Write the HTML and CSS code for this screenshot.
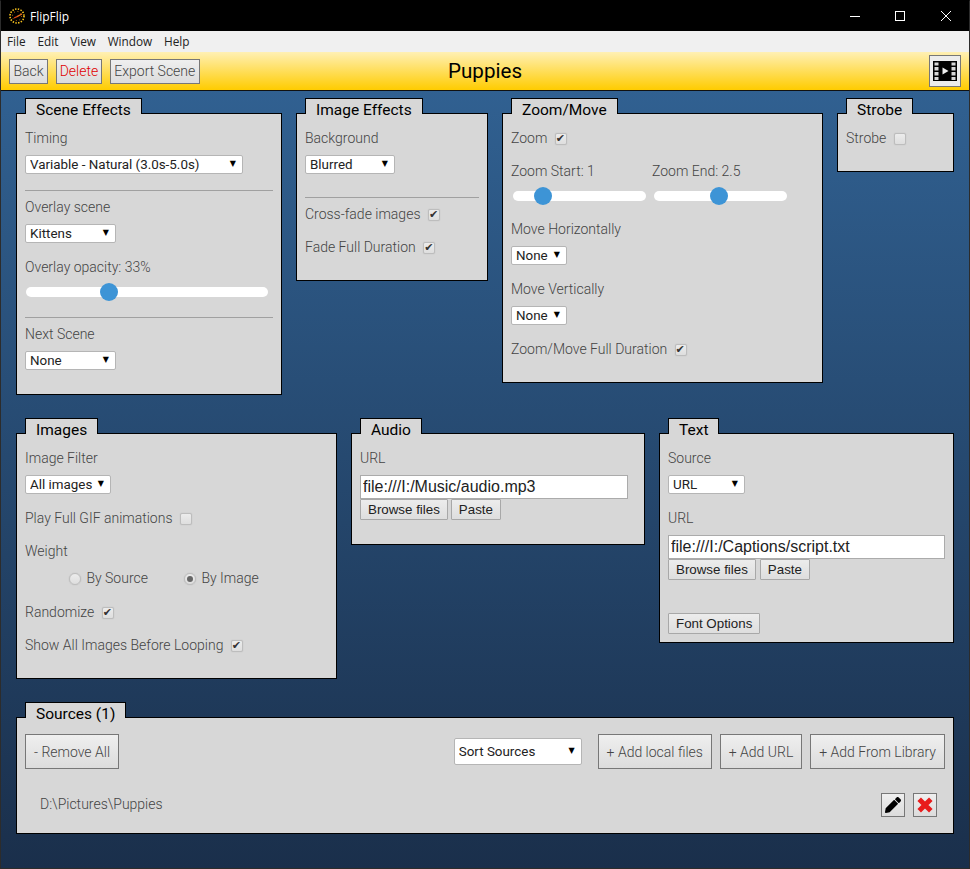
FILE: index.html
```html
<!DOCTYPE html>
<html lang="en">
<head>
    <meta charset="UTF-8">
    <title>FlipFlip</title>
    <link rel="stylesheet" href="styles.css">
</head>
<body>
<div class="app">
    <div class="titlebar">
        <svg class="logo" width="16" height="16" viewBox="0 0 16 16">
            <circle cx="8" cy="8" r="7" fill="none" stroke="#ffc81e" stroke-width="1.6" stroke-dasharray="1.4 1.4"/>
            <circle cx="8" cy="8" r="4.6" fill="none" stroke="#e08a10" stroke-width="0.9" stroke-dasharray="1 2.6"/>
            <path d="M8 8.600 L13 6" stroke="#f4721c" stroke-width="1.300"/>
            <path d="M8 8.600 L5 10" stroke="#e0441a" stroke-width="1.300"/>
        </svg>
        <span class="app-name">FlipFlip</span>
        <div class="window-controls">
            <svg class="win-min" width="10" height="10" viewBox="0 0 10 10"><path d="M0 5.500H10" stroke="#fff"/></svg>
            <svg class="win-max" width="10" height="10" viewBox="0 0 10 10"><rect x="0.500" y="0.500" width="9" height="9" fill="none" stroke="#fff"/></svg>
            <svg class="win-close" width="10" height="10" viewBox="0 0 10 10"><path d="M0 0L10 10M10 0L0 10" stroke="#fff"/></svg>
        </div>
    </div>
    <div class="menubar">
        <span>File</span><span>Edit</span><span>View</span><span>Window</span><span>Help</span>
    </div>
    <header class="header">
        <div class="header-left">
            <button class="tool-button">Back</button>
            <button class="tool-button delete">Delete</button>
            <button class="tool-button">Export Scene</button>
        </div>
        <h1 class="scene-title">Puppies</h1>
        <div class="header-right">
            <button class="play-button">
                <svg width="24" height="20" viewBox="0 0 24 20">
                    <rect width="24" height="20" fill="#000"/>
                    <path d="M1.500 1.500h4v3h-4zM1.500 6h4v3.500h-4zM1.500 11h4v3.500h-4zM1.500 16h4v3h-4zM18.500 1.500h4v3h-4zM18.500 6h4v3.500h-4zM18.500 11h4v3.500h-4zM18.500 16h4v3h-4z" fill="#d6d6d6"/>
                    <path d="M9.500 6.500L15.500 10L9.500 13.500z" fill="#eee"/>
                </svg>
            </button>
        </div>
    </header>

    <main class="content">
        <div class="row">
            <section class="card card-scene">
                <div class="tab">Scene Effects</div>
                <div class="panel">
                    <div class="label">Timing</div>
                    <div class="select select-timing"><select><option>Variable - Natural (3.0s-5.0s)</option></select></div>
                    <hr class="rule">
                    <div class="label">Overlay scene</div>
                    <div class="select select-scene"><select><option>Kittens</option></select></div>
                    <div class="label spaced">Overlay opacity: 33%</div>
                    <input class="slider slider-opacity" type="range" min="0" max="100" value="33">
                    <hr class="rule">
                    <div class="label">Next Scene</div>
                    <div class="select select-scene"><select><option>None</option></select></div>
                </div>
            </section>

            <section class="card card-image">
                <div class="tab">Image Effects</div>
                <div class="panel">
                    <div class="label">Background</div>
                    <div class="select select-bg"><select><option>Blurred</option></select></div>
                    <hr class="rule rule-low">
                    <label class="check-row">Cross-fade images <input type="checkbox" checked></label>
                    <label class="check-row spaced">Fade Full Duration <input type="checkbox" checked></label>
                </div>
            </section>

            <section class="card card-zoom">
                <div class="tab">Zoom/Move</div>
                <div class="panel">
                    <label class="check-row">Zoom <input type="checkbox" checked></label>
                    <div class="zoom-pair">
                        <div class="zoom-col">
                            <div class="label">Zoom Start: 1</div>
                            <input class="slider slider-zoom" type="range" min="0.1" max="5" step="0.1" value="1">
                        </div>
                        <div class="zoom-col">
                            <div class="label">Zoom End: 2.5</div>
                            <input class="slider slider-zoom" type="range" min="0.1" max="5" step="0.1" value="2.5">
                        </div>
                    </div>
                    <div class="label spaced">Move Horizontally</div>
                    <div class="select select-move"><select><option>None</option></select></div>
                    <div class="label spaced">Move Vertically</div>
                    <div class="select select-move"><select><option>None</option></select></div>
                    <label class="check-row spaced">Zoom/Move Full Duration <input type="checkbox" checked></label>
                </div>
            </section>

            <section class="card card-strobe">
                <div class="tab">Strobe</div>
                <div class="panel">
                    <label class="check-row">Strobe <input type="checkbox"></label>
                </div>
            </section>
        </div>

        <div class="row">
            <section class="card card-images">
                <div class="tab">Images</div>
                <div class="panel">
                    <div class="label">Image Filter</div>
                    <div class="select select-filter"><select><option>All images</option></select></div>
                    <label class="check-row spaced">Play Full GIF animations <input type="checkbox"></label>
                    <div class="label weight-label">Weight</div>
                    <div class="radio-row">
                        <label class="radio radio-source"><input type="radio" name="weight"> By Source</label>
                        <label class="radio"><input type="radio" name="weight" checked> By Image</label>
                    </div>
                    <label class="check-row randomize">Randomize <input type="checkbox" checked></label>
                    <label class="check-row spaced">Show All Images Before Looping <input type="checkbox" checked></label>
                </div>
            </section>

            <section class="card card-audio">
                <div class="tab">Audio</div>
                <div class="panel">
                    <div class="label">URL</div>
                    <input class="url-input" type="text" value="file:///I:/Music/audio.mp3">
                    <div class="file-buttons">
                        <button class="small-button">Browse files</button>
                        <button class="small-button">Paste</button>
                    </div>
                </div>
            </section>

            <section class="card card-text">
                <div class="tab">Text</div>
                <div class="panel">
                    <div class="label">Source</div>
                    <div class="select select-source"><select><option>URL</option></select></div>
                    <div class="label spaced">URL</div>
                    <input class="url-input" type="text" value="file:///I:/Captions/script.txt">
                    <div class="file-buttons">
                        <button class="small-button">Browse files</button>
                        <button class="small-button">Paste</button>
                    </div>
                    <button class="small-button font-options">Font Options</button>
                </div>
            </section>
        </div>

        <div class="row">
            <section class="card card-sources">
                <div class="tab">Sources (1)</div>
                <div class="panel">
                    <div class="sources-bar">
                        <button class="tool-button big">- Remove All</button>
                        <div class="sources-actions">
                            <div class="select select-sort"><select><option>Sort Sources</option></select></div>
                            <button class="tool-button big add-first">+ Add local files</button>
                            <button class="tool-button big">+ Add URL</button>
                            <button class="tool-button big">+ Add From Library</button>
                        </div>
                    </div>
                    <div class="source-item">
                        <span class="source-path">D:\Pictures\Puppies</span>
                        <button class="icon-button">
                            <svg width="16" height="16" viewBox="0 0 512 512"><path d="M497.900 142.100l-46.100 46.100c-4.700 4.700-12.300 4.700-17 0l-111-111c-4.700-4.700-4.700-12.300 0-17l46.100-46.100c18.700-18.700 49.100-18.700 67.900 0l60.100 60.100c18.800 18.700 18.800 49.100 0 67.900zM284.200 99.800L21.600 362.400.4 483.900c-2.900 16.400 11.400 30.600 27.800 27.800l121.500-21.300 262.600-262.600c4.700-4.700 4.700-12.300 0-17l-111-111c-4.800-4.700-12.400-4.700-17.100 0z" fill="#000"/></svg>
                        </button>
                        <button class="icon-button">
                            <svg width="16" height="16" viewBox="0 0 16 16"><path d="M2.200 2.200L13.800 13.800M13.800 2.200L2.200 13.800" stroke="#e81c1c" stroke-width="5"/></svg>
                        </button>
                    </div>
                </div>
            </section>
        </div>
    </main>
</div>
</body>
</html>
```

FILE: styles.css
```css
* {
    box-sizing: border-box;
}
html, body {
    margin: 0;
    height: 100%;
    overflow: hidden;
}
body {
    font-family: Roboto, sans-serif;
    font-weight: 300;
    font-size: 14px;
    color: #444;
}
button, select, input {
    font-family: inherit;
}
.app {
    height: 869px;
    border: 1px solid #2c2c2c;
    border-top-color: #000;
    display: flex;
    flex-direction: column;
    background: linear-gradient(#336699, #1a2f4b);
}

/* window chrome */
.titlebar {
    height: 30px;
    background: #000;
    color: #fff;
    display: flex;
    align-items: center;
    padding-left: 8px;
    flex-shrink: 0;
}
.logo {
    margin-right: 5px;
}
.app-name {
    font-family: "Open Sans", sans-serif;
    font-weight: 400;
    font-size: 12px;
}
.window-controls {
    margin-left: auto;
    display: flex;
    align-items: center;
}
.win-min {
    margin-right: 35px;
}
.win-max {
    margin-right: 36px;
}
.win-close {
    margin-right: 18px;
}
.menubar {
    height: 21px;
    background: #f0f0f0;
    display: flex;
    align-items: center;
    gap: 11.75px;
    padding: 0 0 1px 6px;
    font-family: "Open Sans", sans-serif;
    font-weight: 400;
    font-size: 11.8px;
    color: #222;
    flex-shrink: 0;
}

/* top bar */
.header {
    height: 39px;
    display: grid;
    grid-template-columns: 1fr auto 1fr;
    align-items: center;
    background: linear-gradient(#fff0b4, #ffcc00);
    border-bottom: 1px solid #111;
    flex-shrink: 0;
}
.header-left {
    display: flex;
    gap: 8px;
    padding-left: 8px;
}
.header-right {
    display: flex;
    justify-content: flex-end;
    padding-right: 8px;
}
.scene-title {
    margin: 0;
    font-size: 20.6px;
    font-weight: 400;
    color: #000;
}
.tool-button {
    height: 25px;
    padding: 0 3.5px;
    font-size: 14px;
    font-weight: 300;
    color: #444;
    background: linear-gradient(#efefef, #dcdcdc);
    border: 1px solid #777;
    border-radius: 0;
    white-space: nowrap;
}
.tool-button.delete {
    padding: 0 2.5px;
    color: #e00000;
}
.tool-button.big {
    height: 35px;
    padding: 0 8px;
}
.play-button {
    width: 32px;
    height: 32px;
    padding: 0;
    display: flex;
    align-items: center;
    justify-content: center;
    background: #ececec;
    border: 1px solid #777;
}

/* cards */
.content {
    padding: 7px 15px 0;
}
.row {
    display: flex;
    align-items: flex-start;
    gap: 14px;
    margin-bottom: 23px;
}
.card {
    display: flex;
    flex-direction: column;
    align-items: flex-start;
}
.tab {
    position: relative;
    z-index: 1;
    margin: 0 0 -1px 9px;
    height: 15px;
    padding: 0 10px;
    line-height: 23px;
    font-size: 15.5px;
    font-weight: 400;
    color: #000;
    background: #d7d7d7;
    border: 1px solid #000;
    border-bottom: 0;
    box-sizing: content-box;
}
.panel {
    width: 100%;
    padding: 16px 8px 25px;
    background: #d7d7d7;
    border: 1px solid #000;
}
.card-scene { width: 266px; }
.card-image { width: 192px; }
.card-zoom { width: 321px; }
.card-strobe { width: 117px; }
.card-images { width: 321px; }
.card-audio { width: 294px; }
.card-text { width: 295px; }
.card-sources { width: 938px; }
.card-scene .panel { padding-bottom: 24px; }
.card-audio .panel { padding-bottom: 24px; }
.card-text .panel { padding-bottom: 8px; }
.card-sources .panel { padding-bottom: 16px; }

.label {
    line-height: 16px;
    margin-bottom: 9px;
}
.spaced {
    margin-top: 16px;
}
.weight-label {
    margin-top: 17px;
}
.randomize {
    margin-top: 18px;
}
.rule {
    height: 1px;
    margin: 16px 0 8px;
    border: 0;
    background: #a0a0a0;
}
.rule-low {
    margin-top: 23px;
    width: 100%;
}
.check-row {
    display: block;
    line-height: 16px;
}
.check-row + .check-row.spaced {
    margin-top: 17px;
}
input[type="checkbox"],
input[type="radio"] {
    appearance: none;
    width: 12px;
    height: 12px;
    margin: 0 0 0 4px;
    vertical-align: -2px;
    position: relative;
    background: linear-gradient(#ececec, #dedede);
    border: 1px solid #bdbdbd;
    border-radius: 2px;
    box-shadow: 0 0 1px #aaa;
}
input[type="checkbox"]:checked::after {
    content: "✔";
    position: absolute;
    left: 0;
    top: 0;
    font: 11px/10px "DejaVu Sans", sans-serif;
    color: #333;
}
input[type="radio"] {
    border-radius: 50%;
    margin: 0 2px 0 0;
}
input[type="radio"]:checked::after {
    content: "";
    position: absolute;
    left: 2px;
    top: 2px;
    width: 6px;
    height: 6px;
    border-radius: 50%;
    background: #666;
}

/* selects */
.select {
    position: relative;
    height: 19px;
}
.select select {
    appearance: none;
    width: 100%;
    height: 100%;
    padding: 0 0 0 4px;
    font-size: 13.4px;
    font-weight: 400;
    color: #222;
    background: #fff;
    border: 1px solid #b5b5b5;
    border-radius: 2px;
}
.select::after {
    content: "▼";
    position: absolute;
    right: 7px;
    top: 3px;
    font: 8px/12px "DejaVu Sans", sans-serif;
    color: #000;
}
.select-timing { width: 218px; }
.select-scene { width: 91px; }
.select-bg { width: 90px; }
.select-move { width: 56px; }
.select-filter { width: 86px; }
.select-source { width: 77px; }
.select-sort { width: 128px; height: 27px; }
.select-sort::after { top: 7px; }

/* sliders */
.slider {
    appearance: none;
    display: block;
    height: 18px;
    margin: 0 0 0 1px;
    background: transparent;
}
.slider::-webkit-slider-runnable-track {
    height: 10px;
    background: #fff;
    border-radius: 5px;
}
.slider::-webkit-slider-thumb {
    appearance: none;
    width: 18px;
    height: 18px;
    margin-top: -4px;
    border-radius: 50%;
    background: #3d94d6;
}
.slider-opacity {
    width: 242px;
    margin-top: -1px;
}
.slider-zoom {
    width: 133px;
    margin-left: 2px;
    margin-top: -1px;
}
.zoom-pair {
    display: flex;
    margin-top: 17px;
}
.zoom-col {
    width: 141px;
}

/* weight radios */
.radio-row {
    display: flex;
    padding-left: 44px;
    margin-top: 11px;
    line-height: 16px;
}
.radio-source {
    width: 115px;
}

/* url fields */
.url-input {
    display: block;
    width: 268px;
    height: 24px;
    padding: 0 2px;
    font-family: "Liberation Sans", sans-serif;
    font-weight: 400;
    font-size: 16px;
    color: #222;
    background: #fff;
    border: 1px solid #ababab;
}
.card-text .url-input {
    width: 277px;
}
.file-buttons {
    display: flex;
    gap: 3px;
}
.card-text .file-buttons {
    gap: 4px;
}
.small-button {
    height: 21px;
    padding: 0 7px;
    font-family: "Liberation Sans", sans-serif;
    font-weight: 400;
    font-size: 13.333px;
    color: #222;
    background: linear-gradient(#ececec, #dedede);
    border: 1px solid #a8a8a8;
    border-radius: 1px;
}
.font-options {
    display: block;
    margin-top: 33px;
}

/* sources */
.sources-bar {
    display: flex;
    align-items: center;
    justify-content: space-between;
}
.sources-actions {
    display: flex;
    align-items: center;
    gap: 8px;
}
.tool-button.add-first {
    width: 114px;
    padding: 0;
    margin-left: 8px;
}
.source-item {
    display: flex;
    align-items: center;
    gap: 8px;
    margin-top: 24px;
    padding: 0 8px 0 15px;
}
.source-path {
    margin-right: auto;
    padding-bottom: 2px;
}
.icon-button {
    width: 24px;
    height: 24px;
    padding: 0;
    display: flex;
    align-items: center;
    justify-content: center;
    background: linear-gradient(#efefef, #dcdcdc);
    border: 1px solid #777;
}
```
